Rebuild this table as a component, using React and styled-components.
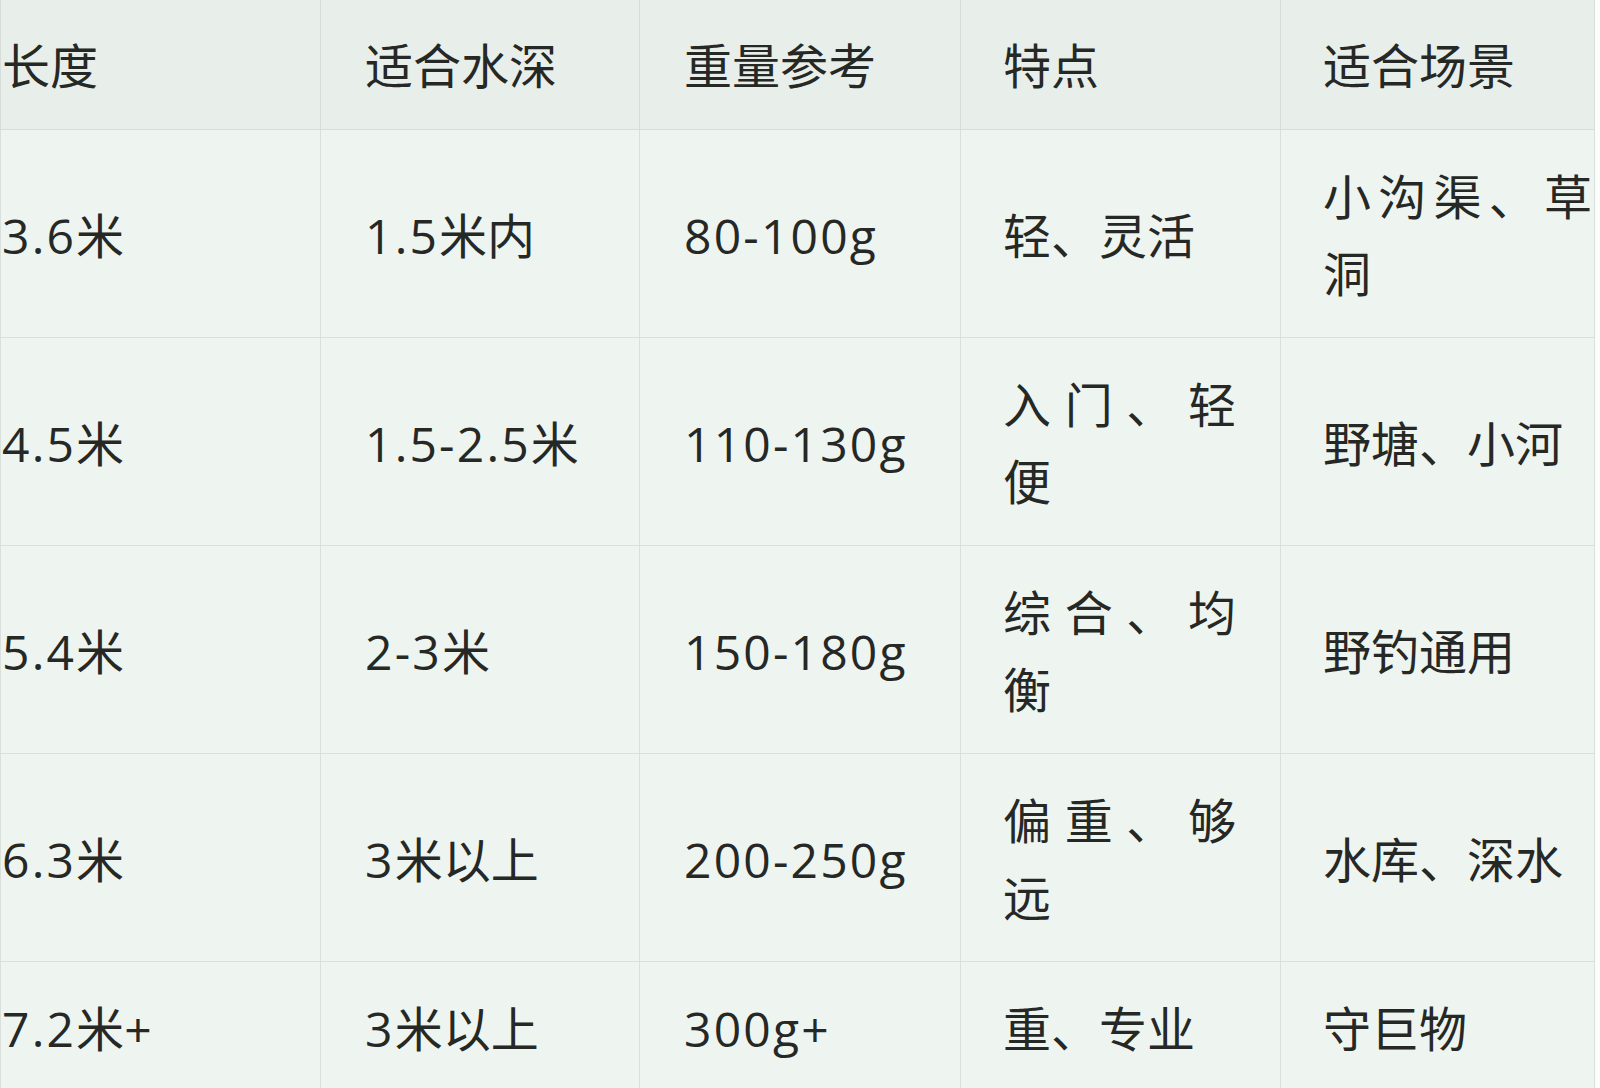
import React from 'react';
import styled, { createGlobalStyle } from 'styled-components';

const rows = [
  ['3.6米', '1.5米内', '80-100g', '轻、灵活', '小沟渠、草洞'],
  ['4.5米', '1.5-2.5米', '110-130g', '入门、轻便', '野塘、小河'],
  ['5.4米', '2-3米', '150-180g', '综合、均衡', '野钓通用'],
  ['6.3米', '3米以上', '200-250g', '偏重、够远', '水库、深水'],
  ['7.2米+', '3米以上', '300g+', '重、专业', '守巨物'],
];

const headers = ['长度', '适合水深', '重量参考', '特点', '适合场景'];
const widths = [320, 319, 321, 320, 314];

// latin runs get a little extra tracking, the cjk runs stay as they are
function renderText(text) {
  return text.split(/([\x20-\x7e]+)/).filter(Boolean).map((part, i) =>
    /^[\x20-\x7e]+$/.test(part) ? <Latin key={i}>{part}</Latin> : part
  );
}

class App extends React.Component {
  render() {
    return (
      <>
        <GlobalStyle />
        <Page>
          <Table>
            <colgroup>
              {widths.map((w, i) => <col key={i} style={{ width: w }} />)}
            </colgroup>
            <thead>
              <tr>
                {headers.map((h, i) => <HeadCell key={h} $col={i}>{h}</HeadCell>)}
              </tr>
            </thead>
            <tbody>
              {rows.map((r, ri) => (
                <tr key={ri}>
                  {r.map((c, i) => <Cell key={i} $col={i}>{renderText(c)}</Cell>)}
                </tr>
              ))}
            </tbody>
          </Table>
        </Page>
      </>
    );
  }
}

const GlobalStyle = createGlobalStyle`
  html, body {
    margin: 0;
    padding: 0;
    background: #fbfcfb;
  }
`;

const Page = styled.div`
  width: 1600px;
  height: 1088px;
  overflow: hidden;
`;

const Table = styled.table`
  width: 1594px;
  table-layout: fixed;
  border-collapse: collapse;
  font-family: "Open Sans", "Noto Sans CJK SC", sans-serif;
  font-size: 48px;
  line-height: 77px;
  color: #262826;
`;

const Latin = styled.span`
  letter-spacing: 2.2px;
`;

const padLeft = (col) => (col === 0 ? '1px' : col >= 3 ? '42px' : '44px');
const padRight = (col) => (col === 4 ? '2px' : '44px');

const HeadCell = styled.th`
  background: #e8efea;
  font-weight: 400;
  text-align: left;
  padding: 27px ${(p) => padRight(p.$col)} 25px ${(p) => padLeft(p.$col)};
  border: 1px solid #d7ddd9;
  border-top: none;
`;

const Cell = styled.td`
  background: #eef5f0;
  text-align: justify;
  vertical-align: middle;
  padding: 28px ${(p) => padRight(p.$col)} 25px ${(p) => padLeft(p.$col)};
  border: 1px solid #d9dfdb;
`;

export default App;
